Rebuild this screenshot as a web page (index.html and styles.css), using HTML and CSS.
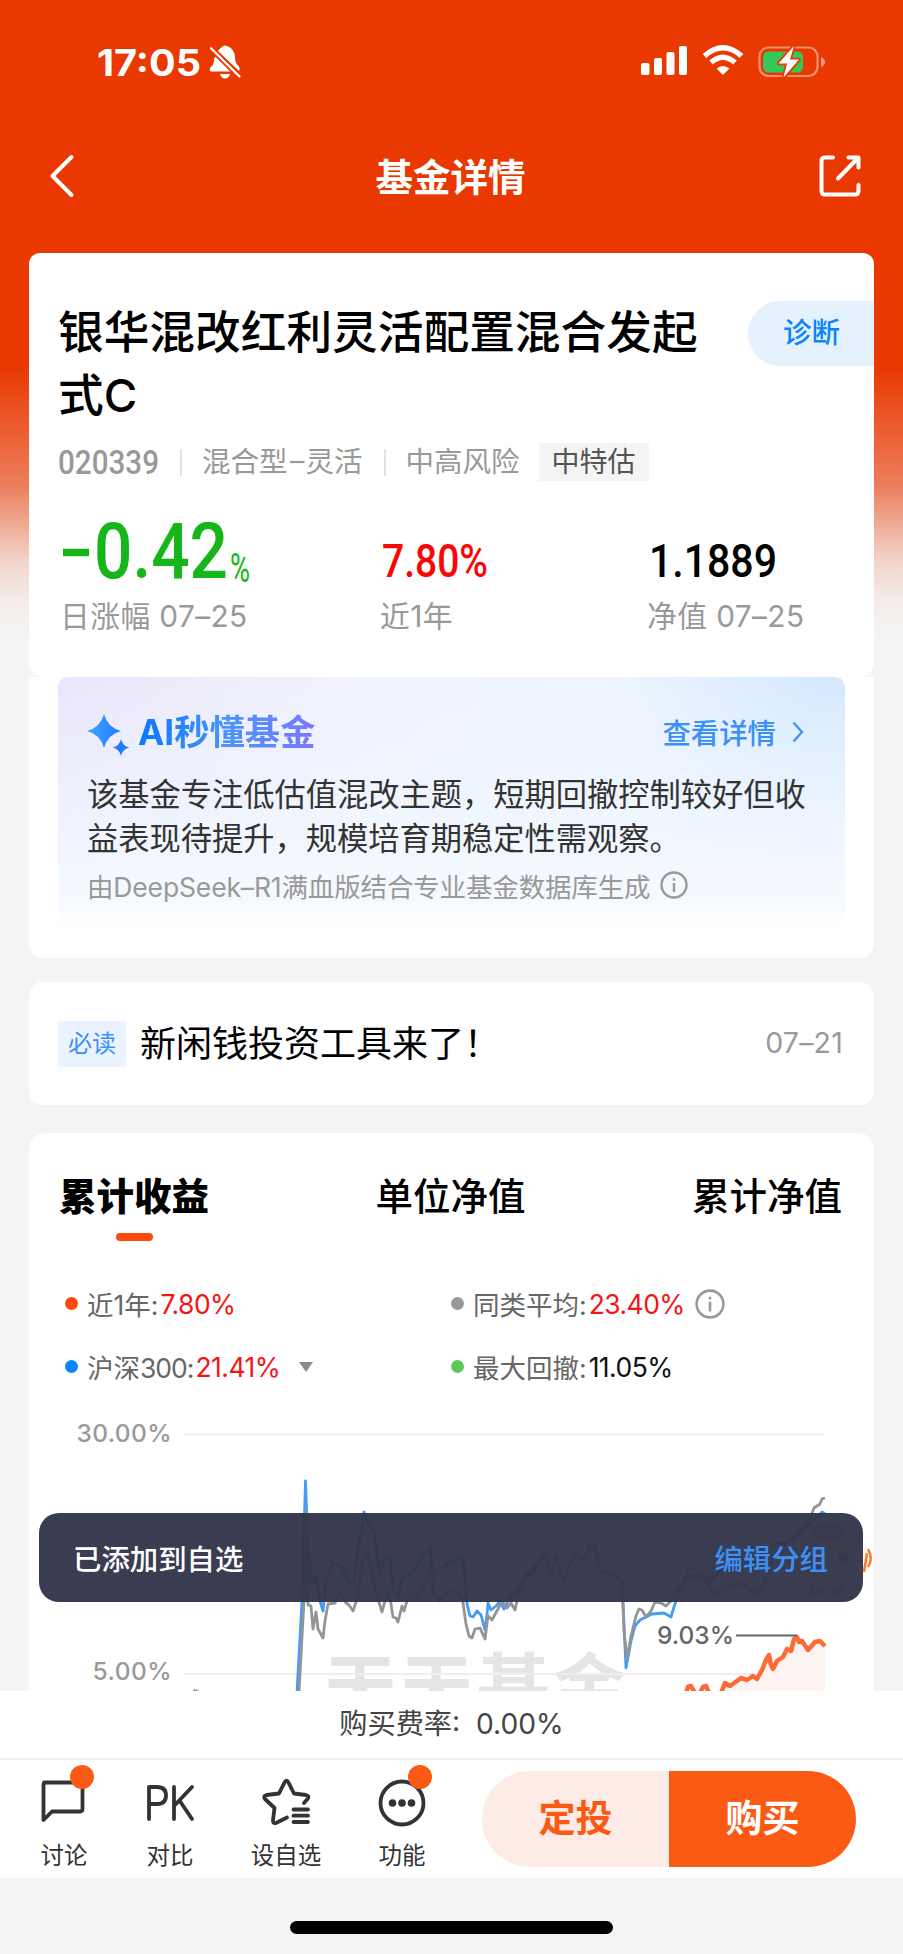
FILE: index.html
```html
<!DOCTYPE html>
<html lang="zh-CN">
<head>
<meta charset="utf-8">
<title>基金详情</title>
<link rel="stylesheet" href="styles.css">
</head>
<body>
<div class="screen">
  <div class="scroll">
    <header class="status">
      <div class="status-left">
        <svg class="clock" viewBox="0 0 108 46"><text x="0" y="34.500" textLength="104" lengthAdjust="spacingAndGlyphs">17:05</text></svg>
        <svg class="bell" viewBox="0 0 32 34">
          <path d="M1 26 Q0 23 3 21 Q5 19 5 14 L6.500 11 L22 26.500 H2.500 Q1.300 26.500 1 26Z" fill="#fff"/>
          <path d="M9 6 Q11 3 13 2 Q15-.5 18 1 Q26 3.500 26 13 Q26 18 30 21.500 Q31.500 24 30 26Z" fill="#fff"/>
          <path d="M11 29 H21 Q19.500 33.500 16 33.500 Q12.500 33.500 11 29Z" fill="#fff"/>
          <path d="M1.500 3.500 L30.500 32" stroke="#e93800" stroke-width="5"/>
          <path d="M2 3.300 L30.500 31.500" stroke="#fff" stroke-width="2.300" stroke-linecap="round"/>
        </svg>
      </div>
      <div class="status-right">
        <svg width="47" height="31" viewBox="0 0 47 31" fill="#fff"><rect x="0" y="18" width="8.500" height="12" rx="2"/><rect x="13" y="13" width="8" height="17" rx="2"/><rect x="25.500" y="7" width="8" height="23" rx="2"/><rect x="38" y="1" width="8" height="29" rx="2"/></svg>
        <svg width="42" height="31" viewBox="0 0 42 31" fill="none" stroke="#fff"><path d="M2.500 11 Q21-5.500 39.500 11" stroke-width="5.500"/><path d="M9 17.500 Q21 7 33 17.500" stroke-width="5.200"/><path d="M14.500 23.500 Q21 18.500 27.500 23.500 L21 30Z" fill="#fff" stroke="none"/></svg>
        <svg width="68" height="34" viewBox="0 0 68 34"><rect x="1.500" y="2.500" width="58" height="28.500" rx="9" fill="none" stroke="#fff" stroke-opacity=".45" stroke-width="2.200"/><path d="M63 12 Q67 13.500 67 17 Q67 20.500 63 22Z" fill="#fff" fill-opacity=".5"/><rect x="5" y="6.500" width="40" height="21" rx="5.500" fill="#34c759"/><path d="M36 1 L20.500 18.500 H29 L25.500 32.500 L41 14.500 H32Z" fill="#fff" stroke="#e93800" stroke-width="3.500" paint-order="stroke" stroke-linejoin="round"/></svg>
      </div>
    </header>
    <nav class="nav">
      <svg class="back" viewBox="0 0 24 42"><path d="M21.500 2 L2.500 21 L21.500 40" fill="none" stroke="#fff" stroke-width="4" stroke-linecap="round" stroke-linejoin="round"/></svg>
      <h1>基金详情</h1>
      <svg class="share" viewBox="0 0 42 42" fill="none" stroke="#fff" stroke-width="4" stroke-linecap="round" stroke-linejoin="round"><path d="M14 2.500 H6 Q2.500 2.500 2.500 6 V36 Q2.500 39.500 6 39.500 H36 Q39.500 39.500 39.500 36 V30"/><path d="M29.500 2.500 H39.500 V12.500 M38.500 3.500 L19 23.500"/></svg>
    </nav>

    <section class="card fund">
      <div class="fund-head">
        <h2>银华混改红利灵活配置混合发起式C</h2>
        <a class="diagnose">诊断</a>
      </div>
      <div class="meta">
        <svg class="code" viewBox="0 0 104 38"><text x="0" y="31" textLength="101" lengthAdjust="spacingAndGlyphs">020339</text></svg>
        <i class="bar"></i>
        <span class="kind">混合型<svg class="dash" viewBox="0 0 18 4"><path d="M2 2H16.500" stroke="#999" stroke-width="2.200"/></svg>灵活</span>
        <i class="bar second"></i>
        <span class="risk">中高风险</span>
        <span class="tag">中特估</span>
      </div>
      <div class="stats">
        <div>
          <svg class="stat" viewBox="0 0 200 80"><g class="down"><path d="M1 37.500H27" stroke="#16b61b" stroke-width="7.500"/><text class="big" x="32" y="63" textLength="134" lengthAdjust="spacingAndGlyphs">0.42</text><text class="pct" x="168" y="67" textLength="20" lengthAdjust="spacingAndGlyphs">%</text></g></svg>
          <p>日涨幅 07–25</p>
        </div>
        <div>
          <svg class="stat" viewBox="0 0 200 80"><text class="up mid" x="0" y="62" textLength="106" lengthAdjust="spacingAndGlyphs">7.80%</text></svg>
          <p>近1年</p>
        </div>
        <div>
          <svg class="stat" viewBox="0 0 200 80"><text class="mid" x="0" y="62" textLength="128" lengthAdjust="spacingAndGlyphs">1.1889</text></svg>
          <p>净值 07–25</p>
        </div>
      </div>
    </section>

    <section class="ai">
      <div class="ai-box">
        <div class="ai-head">
          <svg class="spark" viewBox="0 0 43 43"><defs><linearGradient id="sp" x1="0" x2="1"><stop offset="0" stop-color="#42a5ff"/><stop offset="1" stop-color="#1e7bff"/></linearGradient></defs><path d="M17 0 Q20.500 13.500 34 17 Q20.500 20.500 17 34 Q13.500 20.500 0 17 Q13.500 13.500 17 0Z" fill="url(#sp)"/><path d="M34 25 Q35.500 32 42.500 33.500 Q35.500 35 34 42 Q32.500 35 25.500 33.500 Q32.500 32 34 25Z" fill="#1e7bff"/></svg>
          <b>AI秒懂基金</b>
          <a>查看详情</a>
          <svg class="more" viewBox="0 0 12 22"><path d="M1.500 1.500 L10 11 L1.500 20.500" fill="none" stroke="#3b8ff8" stroke-width="2.200"/></svg>
        </div>
        <p class="ai-text">该基金专注低估值混改主题，短期回撤控制较好但收益表现待提升，规模培育期稳定性需观察。</p>
        <div class="ai-note"><span>由DeepSeek–R1满血版结合专业基金数据库生成</span><svg class="info" viewBox="0 0 28 28"><circle cx="14" cy="14" r="12.500"/><path d="M14 12V21M14 7.200V9.800"/></svg></div>
      </div>
    </section>

    <section class="card notice">
      <span class="must">必读</span>
      <span class="notice-text">新闲钱投资工具来了！</span>
      <time>07–21</time>
    </section>

    <section class="card returns">
      <div class="tabs">
        <span class="active">累计收益</span>
        <span>单位净值</span>
        <span>累计净值</span>
      </div>
      <div class="legend">
        <div><i class="dot red"></i><span>近1年:</span><em>7.80%</em></div>
        <div><i class="dot gray"></i><span>同类平均:</span><em>23.40%</em><svg class="info big-info" viewBox="0 0 28 28"><circle cx="14" cy="14" r="12.500"/><path d="M14 12V21M14 7.200V9.800"/></svg></div>
        <div><i class="dot blue"></i><span>沪深<s>300:</s></span><em>21.41%</em><i class="caret"></i></div>
        <div><i class="dot green"></i><span>最大回撤:</span><em class="dark">11.05%</em></div>
      </div>
      <svg class="chart" viewBox="29 1400 844 291">
        <text class="mark" x="324" y="1713" textLength="302" lengthAdjust="spacing">天天基金</text>
        <g stroke="#efefef" stroke-width="2"><path d="M184 1433.500H825M184 1553.500H825M184 1673H825"/></g>
        <text class="axis" x="76.500" y="1440.500" textLength="95">30.00%</text>
        <text class="axis" x="92.500" y="1679" textLength="79">5.00%</text>
        <path d="M721 1691L725 1682L730 1685L741 1677L747 1679L753 1675L757 1678L762 1669L766 1659L769 1654L773 1668L777 1660L783 1656L787 1648L791 1650L796 1636L802 1640L808 1649L815 1641L820 1640L825 1645V1691Z" fill="#fdf3f0"/>
        <path class="line" stroke="#469af8" d="M297 1691L302 1600L305.500 1480L308 1550L312 1583L316 1575L320 1600L323 1610L326 1580L333 1562L342 1566L350 1582L354 1580L358 1545L362 1530L364 1511L367 1520L374 1530L380 1575L384 1560L390 1555L393 1590L398 1595L402 1578L412 1570L420 1560L430 1545L433 1575L445 1565L455 1558L463 1555L467 1603L470 1615L473 1616L477 1610L481 1614L485 1629L487 1614L488 1602L491 1609L496 1605L500 1600L504 1608L508 1600L520 1585L525 1575L540 1560L546 1553L550 1572L556 1555L563 1580L570 1562L576 1553L583 1560L590 1545L595 1545L600 1570L610 1572L622 1580L626 1667L631 1640L635 1625L640 1619L652 1613L664 1612L671 1616L673 1609L676 1600L682 1585L690 1567L702 1572L710 1580L720 1570L740 1565L757 1560L770 1545L790 1540L805 1528L822 1511L825 1513"/>
        <path class="line" stroke="#929496" d="M299 1691L304 1600L306 1510L308 1604L311 1605L313 1628L316 1611L318 1628L323 1637L325 1620L328 1603L335 1602L340 1592L346 1602L349 1604L353 1610L357 1598L363 1560L367 1550L371 1570L377 1595L382 1611L385 1600L389 1590L393 1616L396 1617L398 1621L402 1605L404 1610L410 1590L416 1597L425 1585L430 1572L434 1592L440 1600L450 1590L460 1592L463 1602L466 1623L469 1635L472 1637L475 1628L480 1627L485 1638L488 1615L492 1619L498 1608L502 1600L507 1607L511 1602L515 1609L520 1587L525 1578L535 1570L540 1560L546 1553L550 1575L556 1555L563 1580L570 1565L576 1553L583 1560L590 1545L595 1545L600 1570L610 1572L622 1580L624 1630L627 1658L631 1635L636 1615L639 1608L642 1609L646 1616L651 1610L655 1601L661 1602L666 1605L671 1600L676 1590L690 1575L702 1575L714 1593L730 1585L740 1582L757 1593L765 1580L774 1553L800 1530L808 1523L814 1507L820 1503L822 1498L825 1497"/>
        <path d="M686 1692L688 1686L691 1685L695 1692M700 1692L703 1686L706 1685L709 1692M721 1692L725 1682L730 1685L741 1677L747 1679L753 1675L757 1678L762 1669L766 1659L769 1654L771 1664L773 1668L777 1660L783 1656L787 1648L791 1650L794 1638L797 1636L799 1641L802 1640L808 1649L815 1641L820 1640L825 1645" fill="none" stroke="#fc6a35" stroke-width="4.500" stroke-linejoin="round"/>
        <path d="M192 1691L195 1687.500L196 1691Z" fill="#f2552c"/><path d="M196 1688L200 1691H196Z" fill="#58b957"/>
        <path d="M736 1634.500H797" stroke="#666" stroke-width="2"/>
        <text class="peak" x="657" y="1643" textLength="77">9.03%</text>
        <g opacity=".55"><circle cx="828" cy="1558" r="36" fill="#ffe3cf"/><ellipse cx="827" cy="1531" rx="16" ry="10" fill="#d33019"/><circle cx="843" cy="1557" r="5" fill="#222"/><path d="M810 1583L827 1591L844 1583V1596L827 1591L810 1596Z" fill="#d33019"/></g>
        <path d="M863 1545Q874 1558 863 1572Z" fill="#fff3ea"/>
        <g fill="none" stroke="#fb7a2c" stroke-width="2.500"><path d="M868 1548Q873.500 1558 868 1566"/><path d="M864 1571L867 1552"/></g>
      </svg>
    </section>
  </div>

  <div class="fee">购买费率: &nbsp;0.00%</div>
  <footer class="actions">
    <div class="tools">
      <div class="tool t1"><div class="icon"><svg viewBox="0 0 48 50"><path d="M4 4.500H40Q42.500 4.500 42.500 7V31Q42.500 33.500 40 33.500H12L3.500 42V7Q3.500 4.500 6 4.500"/></svg><i class="badge"></i></div><span>讨论</span></div>
      <div class="tool t2"><div class="icon"><svg viewBox="0 0 48 50"><path d="M3 41V9H11Q20 9 20 17.500T11 26H3M28 9V41M46 9L28 28M33.500 22.500L46 41"/></svg></div><span>对比</span></div>
      <div class="tool t3"><div class="icon"><svg viewBox="0 0 48 50"><path d="M25 39.500L14 45Q10.500 46 11 42L12.500 30L3 21Q.8 18 4.500 17L17 15.500L22.500 4.500Q24.500 1 26.500 4.500L32 15.500L44 17Q48 18 45.500 21L42 25"/><path d="M31.500 31.500H46M31.500 37.700H46M31.500 44H46"/></svg></div><span>设自选</span></div>
      <div class="tool t4"><div class="icon"><svg viewBox="0 0 48 50"><circle cx="24" cy="25" r="21.500"/><g fill="#333" stroke="none"><circle cx="14.500" cy="25" r="3.800"/><circle cx="24" cy="25" r="3.800"/><circle cx="33.500" cy="25" r="3.800"/></g></svg><i class="badge"></i></div><span>功能</span></div>
    </div>
    <div class="buttons"><a class="invest">定投</a><a class="buy">购买</a></div>
  </footer>
  <div class="home"><i></i></div>
  <div class="toast"><span>已添加到自选</span><a>编辑分组</a></div>
</div>
</body>
</html>
```
FILE: styles.css
```css
* { box-sizing: border-box; margin: 0; padding: 0; }
body { background: #f4f4f4; font-family: Inter, "Noto Sans CJK SC", sans-serif; color: #000; }
svg { display: block; flex: none; overflow: visible; }
i, em { font-style: normal; }
s { text-decoration: none; letter-spacing: -1px; }
.screen { position: relative; width: 903px; height: 1954px; overflow: hidden; display: flex; flex-direction: column; }
.scroll { height: 1691px; flex: none; overflow: hidden; background: linear-gradient(#e93800 0 365px, #ec7d5b 485px, #f3d3c9 560px, #f4ebe9 600px, #f4f4f4 640px); }

.status { height: 120px; display: flex; justify-content: space-between; padding: 41px 77px 0 97px; }
.status-left, .status-right { display: flex; }
.clock { width: 108px; height: 46px; font-size: 37px; font-weight: 700; fill: #fff; }
.bell { width: 32px; height: 34px; margin: 4px 0 0 4px; }
.status-right { padding-top: 4px; gap: 14px; }

.nav { height: 133px; padding: 34px 42px 0 50px; display: flex; justify-content: space-between; align-items: flex-start; }
.nav h1 { font-size: 37.500px; font-weight: 700; line-height: 48px; color: #fff; margin-left: 8px; }
.back { width: 24px; height: 42px; margin-top: 1px; }
.share { width: 42px; height: 42px; margin-top: 1px; }

.card { margin: 0 29px; background: #fff; border-radius: 14px; }
.fund { height: 424px; border-radius: 11px 11px 14px 14px; }
.fund-head { display: flex; justify-content: space-between; padding: 49px 0 0 29px; }
.fund-head h2 { width: 645px; height: 125px; font-size: 45.700px; line-height: 62.500px; font-weight: 500; }
.diagnose { width: 126px; height: 65px; line-height: 64px; margin-top: -1px; border-radius: 33px 0 0 33px; background: #e5f2fe; color: #0a84ff; font-size: 28.500px; font-weight: 500; padding-left: 35px; }
.meta { height: 38px; margin: 16px 0 0 29px; display: flex; align-items: center; font-size: 28.500px; line-height: 38px; color: #999; }
.code { width: 104px; height: 38px; font: 500 33px Roboto, sans-serif; fill: #999; }
.bar { width: 2px; height: 27px; background: #e2e2e2; margin: 0 20px 0 18px; }
.bar.second { margin: 0 20px 0 21px; }
.kind { display: flex; align-items: center; }
.dash { width: 18px; height: 4px; }
.tag { background: #f4f4f4; color: #555; font-size: 28px; padding: 0 13px; margin-left: 19px; }
.stats { display: grid; grid-template-columns: 320px 267px 1fr; padding: 34px 0 0 33px; }
.stat { width: 200px; height: 80px; font-family: Roboto, sans-serif; font-weight: 500; }
.big { font-size: 77px; }
.pct { font-size: 40px; font-weight: 400; }
.mid { font-size: 47px; }
.down { fill: #16b61b; }
.up { fill: #fb0505; }
.stats p { margin-left: -2px; font-size: 29.800px; line-height: 42px; letter-spacing: .4px; color: #999; }

.ai { height: 281px; margin: 0 29px; padding: 0 29px; background: #fff; border-radius: 0 0 14px 14px; }
.ai-box { height: 252px; border-radius: 10px; padding: 33px 29px 0 29px; background: linear-gradient(transparent 0, rgba(240,247,255,.6) 50%, #f5f9ff 88%, #fff 100%), radial-gradient(circle at 100% 0, #d4e7fe, rgba(220,236,254,0) 240px), linear-gradient(100deg, #e9e6fa 0, #f0f1fd 32%, #eef5ff 60%, #eaf4ff 100%); }
.ai-head { height: 46px; display: flex; align-items: center; }
.spark { width: 43px; height: 43px; margin-top: 4px; }
.ai-head b { margin-left: 8px; font-size: 35.300px; line-height: 46px; background: linear-gradient(90deg, #0877ff, #4a94fb 50%, #7a78ff); -webkit-background-clip: text; background-clip: text; color: transparent; }
.ai-head a { margin: -4px 0 0 auto; font-size: 28.400px; font-weight: 500; color: #3b8ff8; }
.more { width: 12px; height: 22px; margin: -3px 12px 0 16px; }
.ai-text { width: 730px; margin-top: 18px; font-size: 31.250px; line-height: 43.500px; color: #333; }
.ai-note { display: flex; align-items: center; height: 38px; margin-top: 5px; font-size: 26.500px; font-weight: 400; letter-spacing: -.15px; color: #999; }
.info { width: 28px; height: 28px; margin-left: 10px; fill: none; stroke: #999; stroke-width: 2.400; }

.notice { height: 123px; margin-top: 24px; padding: 0 31px 0 29px; display: flex; align-items: center; }
.must { width: 68px; height: 46px; line-height: 46px; text-align: center; background: #e9f2fe; border-radius: 4px; color: #3b8ff8; font-size: 24px; }
.notice-text { margin: -5px 0 0 14px; font-size: 36px; }
.notice time { margin: -2px 0 0 auto; color: #999; font-size: 28.500px; letter-spacing: .2px; }

.returns { height: 560px; margin-top: 28px; border-radius: 16px 16px 0 0; }
.tabs { height: 109px; padding: 41px 32px 0 30px; display: flex; justify-content: space-between; font-size: 37.500px; line-height: 46px; font-weight: 500; }
.tabs .active { font-weight: 800; display: flex; flex-direction: column; align-items: center; }
.active::after { content: ""; width: 37px; height: 8px; border-radius: 4px; background: #fc4a0b; margin-top: 13px; }
.legend { height: 159px; padding: 30px 0 0 36px; display: grid; grid-template-columns: 386px 1fr; grid-template-rows: 63px 63px; font-size: 26.500px; color: #666; }
.legend div { display: flex; align-items: center; }
.legend em { color: #f41414; margin-left: 2px; letter-spacing: -.55px; }
.legend em.dark { color: #111; }
.dot { width: 13px; height: 13px; border-radius: 50%; margin-right: 9px; }
.red { background: #fc4a0b; } .gray { background: #999; } .blue { background: #0a84ff; } .green { background: #5bc95a; }
.big-info { width: 30px; height: 30px; }
.caret { border: 7px solid transparent; border-top: 10px solid #8a8a8a; border-bottom: 0; margin-left: 19px; }
.chart { width: 844px; height: 291px; overflow: hidden; }
.line { fill: none; stroke-width: 2.800; stroke-linejoin: round; }
.axis, .peak { font-size: 24.500px; fill: #999; font-weight: 500; }
.peak { fill: #666; }
.mark { font-size: 73px; font-weight: 700; fill: #e5e5e5; font-family: "Noto Sans CJK SC", sans-serif; }

.fee { height: 69px; flex: none; background: #fff; border-bottom: 2px solid #f0f0f0; text-align: center; line-height: 67px; font-size: 28.200px; color: #444; }
.actions { height: 118px; flex: none; background: #fff; display: flex; align-items: flex-start; justify-content: space-between; padding: 11px 47px 0 22px; }
.tools { display: flex; padding-top: 7px; }
.tool { display: flex; flex-direction: column; align-items: center; width: 84px; font-size: 23.500px; line-height: 30px; color: #333; }
.t2 { margin-left: 22px; } .t3 { margin-left: 32px; } .t4 { margin-left: 32px; }
.tool span { margin-top: 13px; }
.icon { position: relative; width: 48px; height: 50px; }
.icon svg { width: 48px; height: 50px; fill: none; stroke: #333; stroke-width: 3.800; stroke-linecap: round; stroke-linejoin: round; }
.badge { position: absolute; top: -13px; right: -6px; width: 24px; height: 24px; border-radius: 50%; background: #fa5a14; }
.buttons { display: flex; width: 374px; height: 96px; border-radius: 48px; overflow: hidden; font-size: 37px; line-height: 95px; font-weight: 700; text-align: center; }
.buttons a { flex: 1; }
.invest { background: #fdece5; color: #fa5a14; }
.buy { background: #fa5a14; color: #fff; }
.home { flex: 1; background: #f4f4f4; display: flex; justify-content: center; padding-top: 43px; }
.home i { width: 323px; height: 13px; border-radius: 7px; background: #000; }
.toast { position: absolute; left: 39px; top: 1513px; width: 824px; height: 89px; border-radius: 20px; background: rgba(50,52,74,.96); color: #fff; display: flex; align-items: center; justify-content: space-between; padding: 0 35px 0 34px; font-size: 28.400px; font-weight: 500; }
.toast a { color: #3d90f6; }
```
